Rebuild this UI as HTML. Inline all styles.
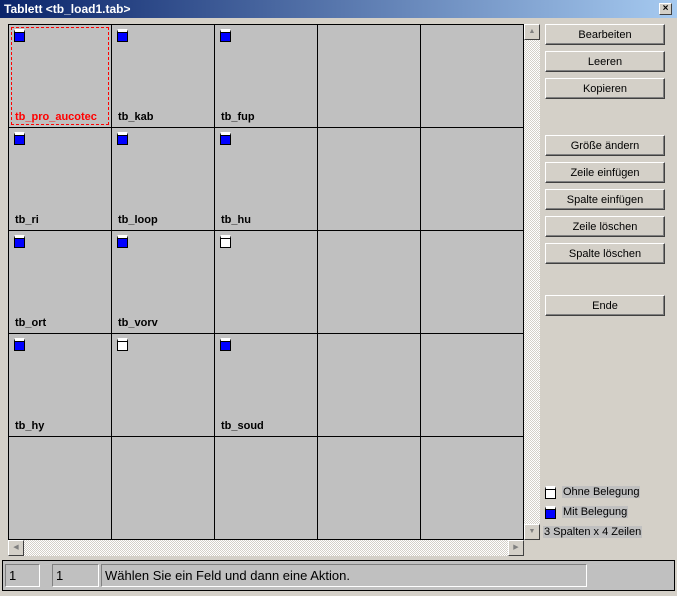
<!DOCTYPE html>
<html><head><style>
*{margin:0;padding:0;box-sizing:border-box}
body{width:677px;height:596px;background:#d4d0c8;position:relative;overflow:hidden;font-family:"Liberation Sans",sans-serif;font-size:11px}
.t{position:absolute;left:0;top:0;width:677px;height:18px;background:linear-gradient(to right,#0a246a,#a6caf0);color:#fff;font-weight:bold;font-size:12px;padding:2px 4px}
.x{position:absolute;right:5px;top:3px;width:13px;height:12px;background:#d4d0c8;border:1px solid;border-color:#fff #404040 #404040 #fff;font-size:10px;color:#000;text-align:center;line-height:10px;font-weight:bold}
.c{position:absolute;width:104px;height:104px;background:#c0c0c0;border:1px solid #000}
.i{position:absolute;left:5px;top:4px;width:11px;height:13px;border:1px solid #000;background:#0000ff;border-top:3px solid #fff;box-shadow:inset 0 1px 0 #000}
.i.w{background:#fff}
.l{position:absolute;left:6px;top:86px;font-weight:bold;font-size:11px;color:#000}
.b{position:absolute;left:545px;width:120px;height:21px;border:1px solid;border-color:#fff #404040 #404040 #fff;box-shadow:inset -1px -1px 0 #808080;text-align:center;line-height:21px;font-size:11px;background:#d4d0c8}
.sb{position:absolute;background:repeating-conic-gradient(#fff 0 25%,#d4d0c8 0 50%) 0 0/2px 2px}
.ar{position:absolute;width:16px;height:16px;background:#d4d0c8;border:1px solid;border-color:#fff #404040 #404040 #fff;font-size:7px;color:#808080;text-align:center;line-height:14px}
.st{position:absolute;top:564px;height:23px;border:1px solid;border-color:#808080 #fff #fff #808080;font-size:13px;padding:3px 3px;background:#c0c0c0}
</style></head><body>
<div class="t">Tablett &lt;tb_load1.tab&gt;<div class="x">×</div></div>
<div style="position:absolute;left:8px;top:24px;width:516px;height:516px;background:#000"></div>
<div id="g"></div>
<div class="sb" style="left:524px;top:24px;width:16px;height:516px"></div>
<div class="ar" style="left:524px;top:24px">▲</div>
<div class="ar" style="left:524px;top:524px">▼</div>
<div class="sb" style="left:8px;top:540px;width:516px;height:16px"></div>
<div class="ar" style="left:8px;top:540px">◀</div>
<div class="ar" style="left:508px;top:540px">▶</div>
<div style="position:absolute;left:524px;top:540px;width:16px;height:16px;background:#d4d0c8"></div>
<div class="b" style="top:24px">Bearbeiten</div>
<div class="b" style="top:51px">Leeren</div>
<div class="b" style="top:78px">Kopieren</div>
<div class="b" style="top:135px">Größe ändern</div>
<div class="b" style="top:162px">Zeile einfügen</div>
<div class="b" style="top:189px">Spalte einfügen</div>
<div class="b" style="top:216px">Zeile löschen</div>
<div class="b" style="top:243px">Spalte löschen</div>
<div class="b" style="top:295px">Ende</div>
<div class="i w" style="left:545px;top:486px"></div><div style="position:absolute;left:562px;top:486px;background:#c0c0c0;padding:0 1px">Ohne Belegung</div>
<div class="i" style="left:545px;top:506px"></div><div style="position:absolute;left:562px;top:506px;background:#c0c0c0;padding:0 1px">Mit Belegung</div>
<div style="position:absolute;left:543px;top:526px;background:#c0c0c0;padding:0 1px">3 Spalten x 4 Zeilen</div>
<div style="position:absolute;left:2px;top:560px;width:673px;height:31px;border:1px solid #000;background:#c0c0c0"></div>
<div class="st" style="left:5px;width:35px">1</div>
<div class="st" style="left:52px;width:47px">1</div>
<div class="st" style="left:101px;width:486px">Wählen Sie ein Feld und dann eine Aktion.</div>
<script>
var d=[["tb_pro_aucotec",1],["tb_kab",1],["tb_fup",1],0,0,["tb_ri",1],["tb_loop",1],["tb_hu",1],0,0,["tb_ort",1],["tb_vorv",1],["",0],0,0,["tb_hy",1],["",0],["tb_soud",1],0,0,0,0,0,0,0];
var h="";
for(var r=0;r<5;r++)for(var c=0;c<5;c++){var e=d[r*5+c];h+='<div class="c" style="left:'+(8+c*103)+'px;top:'+(24+r*103)+'px">';
if(e){h+='<div class="i'+(e[1]?'':' w')+'"></div>';if(e[0])h+='<div class="l"'+(r+c==0?' style="color:#f00"':'')+'>'+e[0]+'</div>';}
if(r+c==0)h+='<div style="position:absolute;left:2px;top:2px;right:2px;bottom:2px;border:1px dashed #f00"></div>';
h+='</div>';}
document.getElementById("g").innerHTML=h;
</script>
</body></html>
